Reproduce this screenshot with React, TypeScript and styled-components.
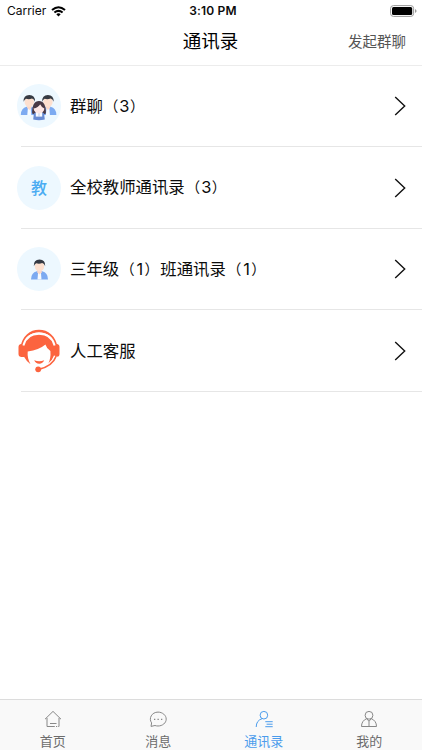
import React from "react";
import styled, { createGlobalStyle } from "styled-components";

const GlobalStyle = createGlobalStyle`
  * { box-sizing: border-box; }
  body {
    margin: 0;
    background: #fff;
    overflow: hidden;
    font-family: Inter, "Noto Sans CJK SC", sans-serif;
    color: #0c0c0c;
  }
`;

const Screen = styled.div`
  width: 422px;
  height: 750px;
  display: flex;
  flex-direction: column;
  background: #fff;
`;

const StatusBar = styled.header`
  height: 22px;
  display: grid;
  grid-template-columns: 1fr auto 1fr;
  align-items: center;
  padding: 0 5px 0 7px;
  font-size: 12px;
  line-height: 22px;
`;

const Carrier = styled.div`
  display: flex;
  align-items: center;
  gap: 5px;
  letter-spacing: -0.02px;
`;

const Clock = styled.div`
  font-weight: 600;
  font-size: 12px;
  letter-spacing: 0.18px;
  padding-left: 2px;
`;

const BatterySlot = styled.div`
  display: flex;
  justify-content: flex-end;
`;

const NavBar = styled.div`
  height: 43.5px;
  display: grid;
  grid-template-columns: 1fr auto 1fr;
  align-items: center;
  padding: 0 16px 4px 15px;
  border-bottom: 1px solid #ececec;
`;

const Title = styled.h1`
  grid-column: 2;
  margin: 0;
  font-size: 18.5px;
  line-height: 26px;
  font-weight: 400;
  color: #000;
`;

const NavAction = styled.button`
  justify-self: end;
  border: 0;
  padding: 1px 0 0;
  background: none;
  font: inherit;
  font-size: 14.5px;
  line-height: 24px;
  color: #555;
`;

const List = styled.main`
  flex: 1;
`;

const Row = styled.div`
  height: 81.5px;
  display: flex;
  align-items: center;
  padding: 0 16px 0 17px;
  background: linear-gradient(#e6e6e6, #e6e6e6) 21px 100% / 100% 1px no-repeat;
`;

const Avatar = styled.div<{ $plain?: boolean }>`
  width: 44px;
  height: 44px;
  border-radius: 50%;
  background: ${(p) => (p.$plain ? "transparent" : "#edf8ff")};
  color: #4bacf2;
  font-size: 16px;
  line-height: 22px;
  font-weight: 500;
  display: flex;
  align-items: center;
  justify-content: center;
`;

const Label = styled.span`
  flex: 1;
  margin-left: 9px;
  font-size: 16.4px;
  line-height: 24px;
  white-space: nowrap;
`;

const Paren = styled.span<{ $close?: boolean }>`
  font-size: 14.4px;
  margin: ${(p) => (p.$close ? "0 1.5px 0 0.5px" : "0 1px 0 1.1px")};
`;

const Digit = styled.span<{ $narrow: boolean }>`
  margin: 0 ${(p) => (p.$narrow ? "0.8px" : "0")};
`;

const TabBar = styled.nav`
  height: 51px;
  display: grid;
  grid-template-columns: repeat(4, 1fr);
  background: #f9f9f9;
  border-top: 1px solid #dcdcdc;
`;

const Tab = styled.div<{ $active?: boolean }>`
  display: flex;
  flex-direction: column;
  align-items: center;
  padding-top: 10px;
  gap: 4px;
  font-size: 13px;
  line-height: 18px;
  color: ${(p) => (p.$active ? "#4b9cec" : "#6c6c6c")};
  svg { color: ${(p) => (p.$active ? "#4b9cec" : "#888")}; }
`;

const Wifi = () => (
  <svg width="15" height="11" viewBox="0 0 15 11" fill="none" stroke="#000" strokeWidth="2">
    <path d="M1 4.1Q7.5-1.7 14 4.1" />
    <path d="M3.4 6.6Q7.5 3.1 11.6 6.6" />
    <path d="M7.5 10.4L5.3 8.2Q7.5 6.4 9.7 8.2Z" fill="#000" stroke="none" />
  </svg>
);

const Battery = () => (
  <svg width="27" height="12" viewBox="0 0 27 12">
    <rect x="0.6" y="0.6" width="23" height="10.8" rx="2.8" fill="none" stroke="#999" />
    <rect x="2" y="2" width="20.2" height="8" rx="1.5" fill="#000" />
    <path d="M25 4q1.6.8 1.6 2T25 8z" fill="#999" />
  </svg>
);

const Chevron = () => (
  <svg width="12" height="20" viewBox="0 0 12 20" fill="none" stroke="#111" strokeWidth="1.4">
    <path d="M1.2 0.9L10.7 10L1.2 19.1" />
  </svg>
);

const Man = () => (
  <>
    <path d="M0 20.5Q.2 13.5 5.8 12.3H11.2Q16.8 13.5 17 20.5Z" fill="#7caaf1" />
    <path d="M7.1 13.2h2.8l.6 7.3H6.5z" fill="#f6fbff" />
    <path d="M6.3 10.5h4.4v2.7L8.5 15.6l-2.2-2.4z" fill="#fbd9c8" />
    <ellipse cx="8.5" cy="7.4" rx="4.7" ry="5" fill="#fde0cf" />
    <path d="M2.8 7.2Q2.5.5 8.5.5t5.7 6.7q-1-2.6-3-3.2-3 1.4-6 .3-1.7 1-2.4 2.9z" fill="#353a43" />
  </>
);

const Group = () => (
  <svg width="44" height="44" viewBox="0 0 44 44">
    <g transform="translate(3.8 10.5)"><Man /></g>
    <g transform="translate(22.4 10.5)"><Man /></g>
    <path d="M15.1 29.6Q15 17 22 17T28.9 29.6Q22 33 15.1 29.6Z" fill="#493a45" />
    <path d="M16.2 35.5l.7-6q1.5-1.7 5.1-1.7t5.1 1.7l.7 6q-5.8 1.6-11.6 0z" fill="#688bd3" />
    <path d="M18.8 28h6.4v4.6h-6.4z" fill="#f8fbff" />
    <path d="M22 28.6v4" stroke="#a8b6dc" strokeWidth=".7" />
    <ellipse cx="22" cy="24.7" rx="5.3" ry="4.8" fill="#fde7e4" />
    <path d="M16.6 24.4q-.2-5.8 5.4-5.8t5.4 5.8q-3-1.2-4.2-4.2-2 3.4-6.6 4.2z" fill="#493a45" />
  </svg>
);

const Person = () => (
  <svg width="17" height="21" viewBox="0 0 17 21"><Man /></svg>
);

const Support = () => (
  <svg width="44" height="44" viewBox="0 0 44 44" fill="none">
    <path d="M4.7 18C6.5 7.5 13.5 2 22 2S37.5 7.5 39.3 18" stroke="#fc643f" strokeWidth="2.4" />
    <path d="M6.5 15H4.2q-2.7.3-2.7 3v7q0 3 3.2 3h2.8zM37.5 15h2.3q2.7.3 2.7 3v7q0 3-3.2 3h-2.8z" fill="#fc643f" />
    <path d="M5 18C5 9 13 5.2 22 5.2S39 9 39 18q0 11-7.9 17.2 3-6 2.3-13.2-3.6-2-5-6.4Q22 21.2 10.7 22.5q-.6 7 2.8 12.7Q5 29 5 18Z" fill="#fc643f" />
    <path d="M6.4 16.5Q9.5 4.8 22 4.8T37.6 16.5" stroke="#fff" strokeWidth="2" />
    <path d="M17.2 31.3q5 1.8 10 0-1.4 3.4-5 3.4T17.2 31.3Z" fill="#fc643f" />
    <path d="M38.7 27q-3.2 10-17 13.4" stroke="#fff" strokeWidth="3.6" />
    <path d="M39.2 27q-3.4 10-17.5 13.4" stroke="#fc643f" strokeWidth="1.6" />
    <circle cx="21.2" cy="40.3" r="2.9" fill="#fc643f" />
  </svg>
);

const TabSvg = styled.svg.attrs({
  width: 18,
  height: 18,
  viewBox: "0 0 18 18",
  fill: "none",
  stroke: "currentColor",
  strokeWidth: 1,
})``;

const HomeIcon = () => (
  <TabSvg>
    <path d="M1 9.2L9 1.4l8 7.8M3 8v8.5h7.8M12 16.5h1.2M14.3 16.5H15V8M6 13.5h6.5" />
  </TabSvg>
);

const ChatIcon = () => (
  <TabSvg>
    <path d="M2 16.4l.6-3.5C-.6 8.5 2.7 2.1 9 2.1c4.5 0 8.2 3.2 8.2 7s-3.7 6.9-8.2 6.9c-1.3 0-2-.2-3-.5z" />
    <path d="M5 9.4h1.3M8.5 9.4h1.3M12 9.4h1.3" strokeWidth="1.3" />
  </TabSvg>
);

const ContactsIcon = () => (
  <TabSvg>
    <circle cx="8.9" cy="5.2" r="3.8" />
    <path d="M1.2 17Q1.3 10.5 7 8.7M10.3 11.7h7.4M11.6 14.2h6M10.3 16.7h7.4" />
  </TabSvg>
);

const MeIcon = () => (
  <TabSvg>
    <circle cx="9" cy="5.3" r="3.9" />
    <path d="M6.8 8.6Q1.5 10.8 1.5 16.5H16.5Q16.5 10.8 11.2 8.6M6.8 8.8L9 11.3l2.2-2.5M9 11.3v5" />
  </TabSvg>
);

const contacts = [
  { label: "群聊（3）", avatar: <Group /> },
  { label: "全校教师通讯录（3）", avatar: "教" },
  { label: "三年级（1）班通讯录（1）", avatar: <Person /> },
  { label: "人工客服", avatar: <Support />, plain: true },
];

const tabs = [
  { label: "首页", icon: <HomeIcon /> },
  { label: "消息", icon: <ChatIcon /> },
  { label: "通讯录", icon: <ContactsIcon />, active: true },
  { label: "我的", icon: <MeIcon /> },
];

// Tightens full-width parentheses and evens out the digits between them.
const renderLabel = (label: string) =>
  label.split(/([（）]|\d+)/).map((part, i) => {
    if (part === "（" || part === "）") {
      return <Paren key={i} $close={part === "）"}>{part}</Paren>;
    }
    if (/^\d+$/.test(part)) {
      return <Digit key={i} $narrow={part === "1"}>{part}</Digit>;
    }
    return part;
  });

export default function App() {
  return (
    <Screen>
      <GlobalStyle />
      <StatusBar>
        <Carrier>Carrier <Wifi /></Carrier>
        <Clock>3:10 PM</Clock>
        <BatterySlot><Battery /></BatterySlot>
      </StatusBar>
      <NavBar>
        <Title>通讯录</Title>
        <NavAction>发起群聊</NavAction>
      </NavBar>
      <List>
        {contacts.map((c) => (
          <Row key={c.label}>
            <Avatar $plain={c.plain}>{c.avatar}</Avatar>
            <Label>{renderLabel(c.label)}</Label>
            <Chevron />
          </Row>
        ))}
      </List>
      <TabBar>
        {tabs.map((t) => (
          <Tab key={t.label} $active={t.active}>
            {t.icon}
            <span>{t.label}</span>
          </Tab>
        ))}
      </TabBar>
    </Screen>
  );
}
